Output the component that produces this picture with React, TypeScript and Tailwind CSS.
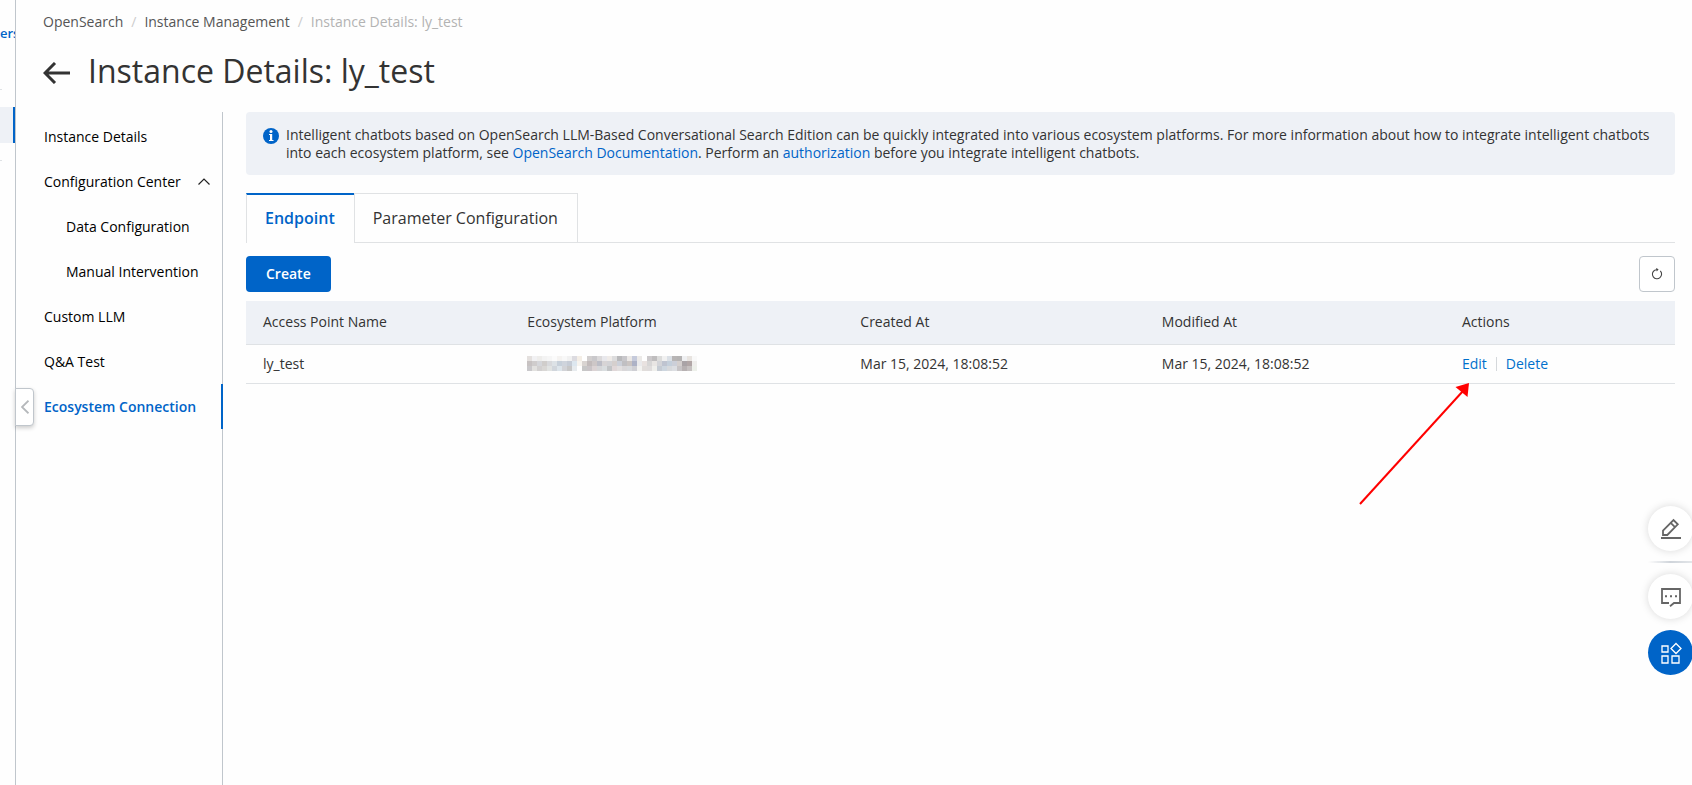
import { useState } from 'react';
import clsx from 'clsx';

const BREADCRUMBS = ['OpenSearch', 'Instance Management'];

const TABS = ['Endpoint', 'Parameter Configuration'];

const COLUMNS = [
  { label: 'Access Point Name', width: 'w-[18.5%]' },
  { label: 'Ecosystem Platform', width: 'w-[23.3%]' },
  { label: 'Created At', width: 'w-[21.1%]' },
  { label: 'Modified At', width: 'w-[21%]' },
  { label: 'Actions', width: 'w-[16.1%]' },
];

const ROWS = [
  { name: 'ly_test', createdAt: 'Mar 15, 2024, 18:08:52', modifiedAt: 'Mar 15, 2024, 18:08:52' },
];

// Masked platform name, one entry per mosaic tile
const MASK_ROWS = [
  ['#e4e0de', '#f1f1f3', '#eeedeb', '#f3f3f3', '#f6f6f6', '#fbfbfb', '#f5f3f1', '#f8f8f8', '#f1f1f1', '#dcdbe0', '#f4eee6', '#ffffff', '#d2cfcf', '#c9c8cb', '#dbd9da', '#e8e8ec', '#efebe8', '#dcdcdd', '#b9b9bb', '#c8c7cb', '#ebe8e6', '#c5cadb', '#eceae8', '#ffffff', '#ccc9cb', '#bfbdbe', '#dcdcdb', '#f1f1f1', '#dbe0e6', '#b8b5b5', '#b5b3b3', '#eff0f2', '#e8e4e0', '#f9f9f9'],
  ['#c7c2c2', '#cfcccc', '#d5d6da', '#d0cdcb', '#d8d9dc', '#dde2e6', '#c7d0da', '#cfd4dc', '#c6ccd6', '#dde7ef', '#f7f4ef', '#d9d4d1', '#c2bbbb', '#cdc7c7', '#bcbdc6', '#d7d4d5', '#d3d3d6', '#d5cfcd', '#ccd0d9', '#c0bfc2', '#cac4c2', '#adb2c6', '#eaeaec', '#e9e2e0', '#d7d6d6', '#e8e5e3', '#d3d4d8', '#bfc4d0', '#c4cfdb', '#cccfd8', '#d4cfce', '#a9a3a6', '#b1a6a6', '#efeeec'],
  ['#c9c8cb', '#e2e1df', '#d2d0d0', '#d9d7d5', '#e1e3e2', '#d1d6dc', '#dde5eb', '#d2d3d7', '#c7c7c7', '#e7ebee', '#ffffff', '#c7c7c7', '#c9c4c7', '#dbd3d4', '#d5d6d8', '#d9dddf', '#c2c4c6', '#e0d7d8', '#e2dfdf', '#d9d7d9', '#d8dadd', '#cfcfd4', '#f3f3f1', '#e1dddb', '#dfdcdc', '#efefec', '#c5cbd3', '#cdd6df', '#d7d9dc', '#dcdee2', '#c7c4c6', '#b7b1b2', '#c5c0c0', '#edf0ea'],
];

const MaskedName = () => (
  <svg width="170" height="16" viewBox="0 0 170 16" role="img" aria-label="Hidden platform name">
    {MASK_ROWS.map((row, y) =>
      row.map((fill, x) => (
        <rect key={`${x}-${y}`} x={x * 5} y={y * 5} width="5" height="5" fill={fill} />
      )),
    )}
  </svg>
);

const BackIcon = () => (
  <svg width="27" height="22" viewBox="0 0 27 22" fill="none" stroke="currentColor" strokeWidth="3">
    <path d="M2 11h25M12 1 2 11l10 10" />
  </svg>
);

const InfoIcon = () => (
  <svg width="16" height="16" viewBox="0 0 16 16" className="shrink-0">
    <circle cx="8" cy="8" r="8" fill="#0064c8" />
    <circle cx="8" cy="3.6" r="1.5" fill="#fff" />
    <path d="M6 6h3.2v6h1.3v1H6v-1h1V7H6z" fill="#fff" />
  </svg>
);

const RefreshIcon = () => (
  <svg width="12" height="12" viewBox="0 0 12 12" fill="none" stroke="#444" strokeWidth="1.1">
    <path d="M3.6 2.2A4.6 4.6 0 1 0 9.3 2.9M3.6 2.2 6.8 1.5" />
    <path d="M5 0 7.6 1.3 5.8 3.4z" fill="#444" stroke="none" />
  </svg>
);

const PencilIcon = () => (
  <svg width="22" height="22" viewBox="0 0 22 22" fill="none" stroke="#666" strokeWidth="1.8">
    <path d="M3 17v-4.5L13.500 2l4.300 4.300L7.300 17zM10.700 4.800l4.300 4.300" />
    <path d="M1 20h20" strokeWidth="2" />
  </svg>
);

const ChatIcon = () => (
  <svg width="22" height="20" viewBox="0 0 22 20" fill="none" stroke="#666" strokeWidth="1.8">
    <path d="M9 16H2V2h18v14h-6l-4 3.2" />
    <path d="M5 8.2h2v2H5zM10 8.2h2v2h-2zM15 8.2h2v2h-2z" fill="#666" stroke="none" />
  </svg>
);

const AppsIcon = () => (
  <svg width="22" height="22" viewBox="0 0 22 22" fill="none" stroke="#fff" strokeWidth="1.3">
    <path d="M2 4h6v6H2zM2 14h6v7H2zM12 14h7v7h-7zM16 1.5l5 5-5 5-5-5z" />
  </svg>
);

const SideNav = () => {
  const [expanded, setExpanded] = useState(true);
  const item = 'flex h-[45px] items-center pl-px';

  return (
    <nav className="w-[180px] shrink-0 border-r border-[#c0c6cc] pt-[2px] text-black">
      <a href="#details" className={item}>Instance Details</a>
      <button
        onClick={() => setExpanded(!expanded)}
        aria-expanded={expanded}
        className={clsx(item, 'w-full justify-between pr-3')}
      >
        Configuration Center
        <svg width="12" height="7" viewBox="0 0 12 7" fill="none" stroke="#222" strokeWidth="1.2">
          <path d={expanded ? 'M.5 6.5 6 1l5.500 5.500' : 'M.5.5 6 6 11.500.5'} />
        </svg>
      </button>
      {expanded && (
        <div className="pl-[22px]">
          <a href="#data" className={item}>Data Configuration</a>
          <a href="#manual" className={item}>Manual Intervention</a>
        </div>
      )}
      <a href="#llm" className={item}>Custom LLM</a>
      <a href="#qa" className={item}>Q&amp;A Test</a>
      <a
        href="#ecosystem"
        aria-current="page"
        className={clsx(item, '-mr-px border-r-2 border-[#0064c8] font-semibold text-[#0064c8]')}
      >
        Ecosystem Connection
      </a>
    </nav>
  );
};

const EndpointTable = () => (
  <table className="mt-[9px] w-full table-fixed border-collapse text-left">
    <thead>
      <tr className="h-[43px] border-b border-[#dfe2e5] bg-[#eef1f6]">
        {COLUMNS.map((col) => (
          <th key={col.label} className={clsx(col.width, 'pl-[17px] font-normal')}>{col.label}</th>
        ))}
      </tr>
    </thead>
    <tbody>
      {ROWS.map((row) => (
        <tr key={row.name} className="h-[39px] border-b border-[#dfe2e5]">
          <td className="pl-[17px]">{row.name}</td>
          <td className="pl-[17px]"><MaskedName /></td>
          <td className="pl-[17px]">{row.createdAt}</td>
          <td className="pl-[17px]">{row.modifiedAt}</td>
          <td className="pl-[17px]">
            <div className="relative flex items-center gap-[9px] text-[#0070cc]">
              <a href="#edit">Edit</a>
              <span className="h-[14px] w-px bg-[#d5d8db]" />
              <a href="#delete">Delete</a>
              {/* Pointer to the edit link */}
              <svg
                width="112"
                height="124"
                viewBox="0 0 112 124"
                className="pointer-events-none absolute -left-[103px] top-[28px]"
              >
                <path d="M1 121 104 8" stroke="#f00" strokeWidth="2" />
                <path d="M110 0 108.500 14 96.500 4z" fill="#f00" />
              </svg>
            </div>
          </td>
        </tr>
      ))}
    </tbody>
  </table>
);

const FloatingTools = () => {
  const tool = 'flex size-[45px] items-center justify-center rounded-full';

  return (
    <div className="fixed -right-px top-[506px] flex flex-col items-center">
      <button aria-label="Survey" className={clsx(tool, 'bg-white shadow-[0_0_8px_rgba(0,0,0,0.15)]')}>
        <PencilIcon />
      </button>
      <span className="mb-[11px] mt-[10px] h-[2px] w-full bg-gradient-to-r from-transparent via-[#cfd4da] to-[#e4e7ea]" />
      <button aria-label="Feedback" className={clsx(tool, 'bg-white shadow-[0_0_8px_rgba(0,0,0,0.15)]')}>
        <ChatIcon />
      </button>
      <button aria-label="Apps" className={clsx(tool, 'mt-[11px] bg-[#0064c8]')}>
        <AppsIcon />
      </button>
    </div>
  );
};

const App = () => {
  const [tab, setTab] = useState(TABS[0]);

  return (
    <div className="flex min-h-screen bg-[#fefefe] font-['Open_Sans','Noto_Sans',sans-serif] text-[14px] leading-[18px] text-[#333]">
      {/* Collapsed product menu */}
      <aside className="w-[16px] shrink-0 overflow-hidden border-r border-[#c0c6cc] pt-[24px]">
        <a href="#versions" className="block text-[13px] font-semibold tracking-normal text-[#0064c8]">ers</a>
        <div className="mt-[47px] h-px w-[2px] bg-[#dfe2e5]" />
        <div className="mt-[17px] h-[36px] border-r-2 border-[#0064c8] bg-[#eef1f6]" />
        <div className="mt-[17px] h-px w-[2px] bg-[#dfe2e5]" />
      </aside>

      <button
        aria-label="Collapse menu"
        className="absolute left-[15px] top-[388px] flex h-[38px] w-[19px] items-center justify-center rounded-r-sm border border-[#c0c6cc] bg-white shadow-[0_2px_4px_rgba(0,0,0,0.2)]"
      >
        <svg width="8" height="14" viewBox="0 0 8 14" fill="none" stroke="#b5b8bb" strokeWidth="1.8">
          <path d="M7.500.7 1 7l6.500 6.300" />
        </svg>
      </button>

      <div className="flex min-w-0 flex-1 flex-col pl-[27px] pr-[17px]">
        <nav aria-label="Breadcrumb" className="flex gap-2 pt-[13px] text-[#555]">
          {BREADCRUMBS.map((crumb) => (
            <span key={crumb} className="flex gap-2">
              <a href={`#${crumb}`}>{crumb}</a>
              <span className="text-[#ccc]">/</span>
            </span>
          ))}
          <span className="text-[#b3b3b3]">Instance Details: ly_test</span>
        </nav>

        <header className="mt-[18px] flex h-[44px] items-center gap-[18px]">
          <button aria-label="Back" className="pt-[3px]"><BackIcon /></button>
          <h1 className="text-[32px] leading-[44px]">Instance Details: ly_test</h1>
        </header>

        <div className="mt-[19px] flex flex-1">
          <SideNav />

          <main className="ml-[23px] min-w-0 flex-1">
            <div className="flex gap-[7px] rounded-sm bg-[#eef1f6] px-[17px] pb-[13px] pt-[14px]">
              <div className="pt-[2px]"><InfoIcon /></div>
              <p>
                Intelligent chatbots based on OpenSearch LLM-Based Conversational Search Edition can be quickly
                integrated into various ecosystem platforms. For more information about how to integrate intelligent
                chatbots into each ecosystem platform, see{' '}
                <a href="#docs" className="text-[#0064c8]">OpenSearch Documentation</a>. Perform an{' '}
                <a href="#authorization" className="text-[#0064c8]">authorization</a> before you integrate intelligent
                chatbots.
              </p>
            </div>

            <div role="tablist" className="mt-[18px] flex h-[50px] text-[16px]">
              {TABS.map((label) => (
                <button
                  key={label}
                  role="tab"
                  aria-selected={tab === label}
                  onClick={() => setTab(label)}
                  className={clsx(
                    'pl-[18px] pr-[19px]',
                    tab === label
                      ? 'border-l border-t-2 border-l-[#e0e2e4] border-t-[#0064c8] pb-[2px] font-semibold text-[#0064c8]'
                      : 'border border-[#e0e2e4]',
                  )}
                >
                  {label}
                </button>
              ))}
              <span className="flex-1 border-b border-[#e0e2e4]" />
            </div>

            <div className="mt-[13px] flex justify-between">
              <button className="h-[36px] rounded-sm bg-[#0064c8] px-[20px] font-semibold text-white">Create</button>
              <button
                aria-label="Refresh"
                className="flex size-[36px] items-center justify-center rounded-sm border border-[#c0c6cc] bg-white"
              >
                <RefreshIcon />
              </button>
            </div>

            <EndpointTable />
          </main>
        </div>
      </div>

      <FloatingTools />
    </div>
  );
};

export default App;
